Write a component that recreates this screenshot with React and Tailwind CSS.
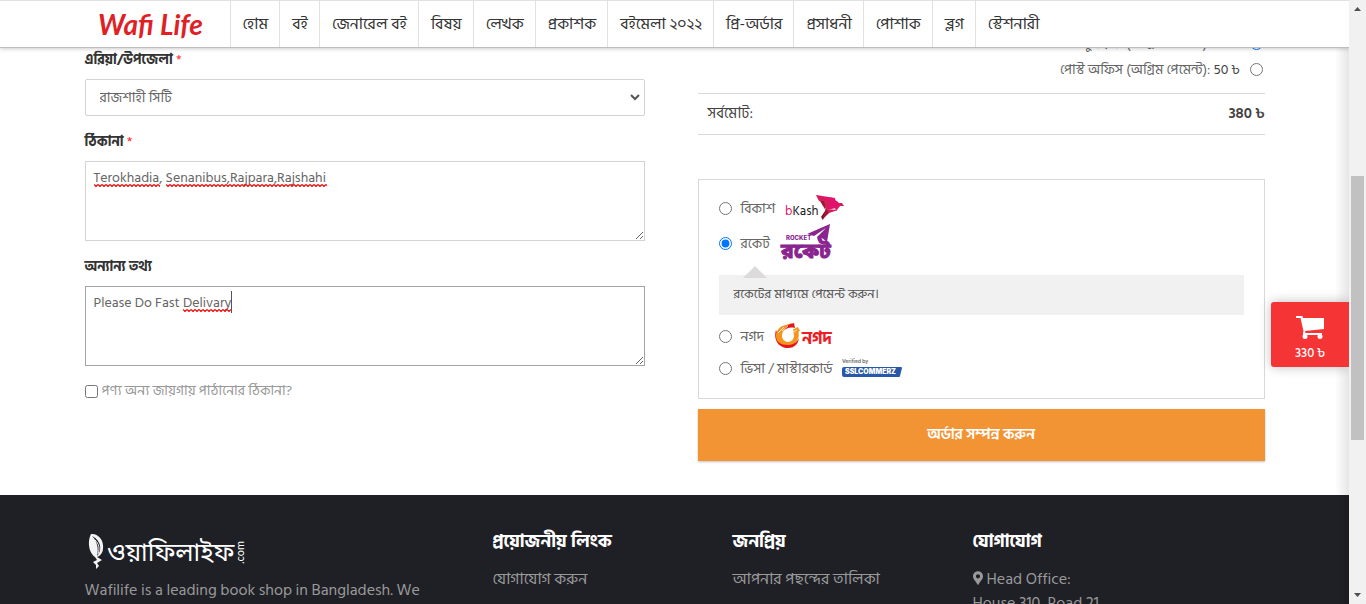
import React, { useId } from "react";
import { FaMapMarkerAlt } from "react-icons/fa";

const navItems = [
  "হোম",
  "বই",
  "জেনারেল বই",
  "বিষয়",
  "লেখক",
  "প্রকাশক",
  "বইমেলা ২০২২",
  "প্রি-অর্ডার",
  "প্রসাধনী",
  "পোশাক",
  "ব্লগ",
  "স্টেশনারী",
];

function Header() {
  return (
    <header className="relative z-10 h-12 shrink-0 border-y border-t-[#e1e1e1] border-b-[#bdbdbd] bg-white shadow-[0_1px_4px_rgba(0,0,0,0.2)]">
      <div className="mx-auto flex h-full w-full max-w-[1180px]">
        <a href="#home" aria-label="Wafi Life" className="flex w-[145px] shrink-0 items-center pl-3">
          <svg viewBox="0 0 110 42" className="h-[42px] w-[110px] overflow-visible">
            <text x="1" y="32" fontFamily="Lato, sans-serif" fontWeight="700" fontStyle="italic" fontSize="28" fill="#e01f26">
              Wafi Life
            </text>
          </svg>
        </a>
        <nav className="flex">
          {navItems.map((item) => (
            <a
              key={item}
              href="#nav"
              className="flex items-center whitespace-nowrap border-l border-[#e1e1e1] pr-[11px] pl-3 text-base text-[#333]"
            >
              {item}
            </a>
          ))}
        </nav>
      </div>
    </header>
  );
}

function Label({ htmlFor, required, children }) {
  return (
    <label htmlFor={htmlFor} className="mb-[7px] block pt-px text-sm leading-6 font-bold text-[#333]">
      {children}
      {required && <span className="font-normal text-[#ff3030]"> *</span>}
    </label>
  );
}

function Squiggle({ className }) {
  const id = useId();
  return (
    <svg className={"pointer-events-none absolute h-[3px] " + className}>
      <defs>
        <pattern id={id} width="4" height="3" patternUnits="userSpaceOnUse">
          <path d="M0 .5 L2 2.5 L4 .5" fill="none" stroke="#ff0000" strokeWidth="1.2" />
        </pattern>
      </defs>
      <rect width="100%" height="3" fill={`url(#${id})`} />
    </svg>
  );
}

function BillingForm() {
  return (
    <form className="pt-[19px]">
      <Label htmlFor="area" required>এরিয়া/উপজেলা</Label>
      <div className="relative">
        <select
          id="area"
          className="block h-[37px] w-full appearance-none rounded-xs border border-[#d3d3d3] bg-white px-[14px] text-sm text-[#666]"
        >
          <option>রাজশাহী সিটি</option>
        </select>
        <svg viewBox="0 0 10 7" className="pointer-events-none absolute top-[15px] right-[5px] h-[7px] w-[10px]">
          <path d="M1 1 L5 5 L9 1" fill="none" stroke="#555" strokeWidth="2" />
        </svg>
      </div>
      <div className="relative mt-[13px]">
        <Label htmlFor="address" required>ঠিকানা</Label>
        <textarea
          id="address"
          spellCheck={false}
          defaultValue="Terokhadia, Senanibus,Rajpara,Rajshahi"
          className="block h-20 w-full border border-[#d3d3d3] px-2 py-[5px] text-sm leading-[22px] text-[#666] outline-none"
        />
        <Squiggle className="top-[55px] left-[9px] w-[66px]" />
        <Squiggle className="top-[55px] left-[81px] w-[161px]" />
      </div>
      <div className="relative mt-[13px]">
        <Label htmlFor="notes">অন্যান্য তথ্য</Label>
        <textarea
          id="notes"
          spellCheck={false}
          defaultValue="Please Do Fast Delivary"
          className="block h-20 w-full border border-[#a4a4a4] px-2 py-[5px] text-sm leading-[22px] text-[#666] outline-none"
        />
        <Squiggle className="top-[55px] left-[98px] w-[49px]" />
        <span className="absolute top-[37px] left-[146px] h-[22px] w-px bg-[#555]" />
      </div>
      <label className="mt-[13px] flex items-center gap-1 text-sm leading-6 text-[#999]">
        <input type="checkbox" className="size-[13px]" />
        পণ্য অন্য জায়গায় পাঠানোর ঠিকানা?
      </label>
    </form>
  );
}

function BkashLogo() {
  return (
    <svg viewBox="0 0 60 28" className="h-7 w-[60px]">
      <text x="0" y="21" fontFamily="'Hind Siliguri', 'Open Sans', sans-serif" fontSize="13" fill="#222">
        <tspan fill="#e2136e">b</tspan>Kash
      </text>
      <path d="M31 1 L50 4 L51 14 L42 16Z" fill="#e2136e" />
      <path d="M31 1 L34 7 H38 L42 16 L45 8Z" fill="#d12053" />
      <path d="M35 7 L39 7 L41 17Z" fill="#9e1638" />
      <path d="M41 15 L53 16 L38 21Z" fill="#d12053" />
      <path d="M41 15 L37 26 L44 19Z" fill="#a3123a" />
      <path d="M46 3 L51 17 L56 11 L53 8Z" fill="#e2136e" />
      <path d="M52 9 L57 9 L59 12 L55 12Z" fill="#d12053" />
      <path d="M40 17 L36 23 L38 26Z" fill="#7d1020" />
    </svg>
  );
}

function RocketLogo() {
  return (
    <svg viewBox="0 0 62 38" className="h-[38px] w-[62px] overflow-visible">
      <text x="6" y="16" fontFamily="Inter, sans-serif" fontWeight="800" fontSize="6" fill="#8a248f">ROCKET</text>
      <text x="1" y="34" fontFamily="'Noto Sans Bengali', sans-serif" fontWeight="700" fontSize="21" fill="#8a248f" stroke="#8a248f">রকেট</text>
      <path d="M27 10 L50 0 L47 18 L42 14 L38 17 L37 13 L46 4 L34 12Z" fill="#8a248f" />
    </svg>
  );
}

function NagadLogo() {
  return (
    <svg viewBox="0 0 60 28" className="h-7 w-[60px] overflow-visible">
      <g transform="translate(1 0)">
        <path d="M1 8 C-2 18 4 26 13 26 C20 26 24 21 24 15 C24 22 8 28 1 8Z" fill="#e3161c" />
        <path d="M1 14 C1 8 5 4 11 3 L17 1 L13 6 C8 8 7 11 7 14 A6 6 0 0 0 19 14 L18 7 L23 8 C26 17 20 23 13 23 C6 23 1 20 1 14Z" fill="#f7941d" />
        <path d="M9 8 C11 4 14 2 19 1 L20 6 C15 5 12 6 9 8Z" fill="#e3161c" />
        <path d="M19 7 L23 5 L25 9 L20 11Z" fill="#f7941d" />
        <path d="M3 11 L9 5 M7 9 L13 4 M18 10 L22 8" stroke="#fff" fill="none" strokeWidth="0.8" />
      </g>
      <text x="28" y="22" fontFamily="'Hind Siliguri', 'Noto Sans Bengali', sans-serif" fontWeight="700" fontSize="17" fill="#ee1c25">নগদ</text>
    </svg>
  );
}

function SslLogo() {
  return (
    <svg viewBox="0 0 60 20" className="h-5 w-[60px]">
      <text x="0" y="5" fontFamily="Inter, sans-serif" fontSize="5" fontWeight="600" fill="#666">Verified by</text>
      <path d="M2 9 H59 Q60 9 60 10 L58 18 Q58 19 57 19 H2 Q0 19 0 17 V11 Q0 9 2 9Z" fill="#2859a8" />
      <text x="3" y="16" fontFamily="Inter, sans-serif" fontSize="7" fontWeight="900" fill="#fff">SSLCOMMERZ</text>
    </svg>
  );
}

function Payment({ name, logo, checked, className }) {
  return (
    <label className={"flex items-center text-sm text-[#666] " + className}>
      <input type="radio" name="payment" defaultChecked={checked} className="mr-[9px] size-[13px]" />
      <span className="mr-[10px] pt-px">{name}</span>
      {logo}
    </label>
  );
}

function OrderSummary() {
  return (
    <section>
      <div className="flex flex-col pt-0.5 text-sm text-[#666]">
        <label className="flex h-[26px] items-center justify-end gap-[10px]">
          <span className="pt-0.5">কুরিয়ার (অগ্রিম পেমেন্ট): 50 ৳</span>
          <input type="radio" name="shipping" defaultChecked className="mr-[2px] size-[13px]" />
        </label>
        <label className="flex h-[26px] items-center justify-end gap-[10px]">
          <span className="pt-0.5">পোস্ট অফিস (অগ্রিম পেমেন্ট): <span className="text-[#444]">50 ৳</span></span>
          <input type="radio" name="shipping" className="mr-[2px] size-[13px]" />
        </label>
      </div>
      <div className="mt-[11px] flex h-[42px] items-center justify-between border-y border-[#d9d9d9] pl-[10px] text-[#444]">
        <span className="text-[15px]">সর্বমোট:</span>
        <span className="text-[15px] font-semibold">380 ৳</span>
      </div>
      <div className="mt-11 border border-[#d9d9d9] px-5 pt-[11px] pb-[14px]">
        <Payment name="বিকাশ" logo={<BkashLogo />} className="h-[34px]" />
        <Payment name="রকেট" logo={<RocketLogo />} checked className="h-9" />
        <div className="relative mt-[14px] mb-[5px] flex h-10 items-center bg-[#f1f1f1] px-[15px] text-[13px] text-[#555]">
          <svg viewBox="0 0 24 12" className="absolute -top-[9px] left-6 h-3 w-6">
            <path d="M0 12 L12 0 L24 12Z" fill="#dcdadb" />
          </svg>
          রকেটের মাধ্যমে পেমেন্ট করুন।
        </div>
        <Payment name="নগদ" logo={<NagadLogo />} className="h-8" />
        <Payment name="ভিসা / মাস্টারকার্ড" logo={<SslLogo />} className="h-8" />
      </div>
      <button type="button" className="mt-[10px] block h-[52px] w-full bg-[#f29434] text-[15px] font-semibold text-white shadow-[0_1px_2px_rgba(0,0,0,0.25)]">
        অর্ডার সম্পন্ন করুন
      </button>
    </section>
  );
}

function FooterColumn({ title, children }) {
  return (
    <div>
      <h3 className="mb-[13px] text-lg leading-6 font-bold text-white">{title}</h3>
      {children}
    </div>
  );
}

function Footer() {
  return (
    <footer className="flex-1 bg-[#1f2026] pt-[35px] text-base leading-6 text-[#999]">
      <div className="mx-auto grid max-w-[1180px] grid-cols-[408px_240px_240px_1fr]">
        <div>
          <svg viewBox="0 0 160 40" className="mt-[3px] ml-[3px] h-10 w-40" role="img" aria-label="ওয়াফিলাইফ.com">
            <path d="M3 1 C10 0 16 7 15 15 C15 20 12 23 9 24 L14 27 L9 30 L11 33 L8 36 L8 32 L5 29 L9 27 L7 24 C1 20 -1 9 3 1Z" fill="#f4f4f4" />
            <path d="M4 3 C9 8 11 15 9 23 C14 18 14 8 4 3Z" fill="#1f2026" />
            <path d="M7 7 C11 11 12 15 10 21" stroke="#f4f4f4" fill="none" />
            <text x="19" y="28" fontFamily="'Noto Sans Bengali', sans-serif" fontSize="25" fill="#fff">ওয়াফিলাইফ</text>
            <text transform="translate(156 31) rotate(-90)" fontFamily="Lato, sans-serif" fontSize="11" fill="#fff">.com</text>
          </svg>
          <p className="mt-[5px] max-w-[360px]">
            Wafilife is a leading book shop in Bangladesh. We
          </p>
        </div>
        <FooterColumn title="প্রয়োজনীয় লিংক">
          <a href="#contact" className="block">যোগাযোগ করুন</a>
          <a href="#terms" className="mt-3 block">শর্তাবলী</a>
        </FooterColumn>
        <FooterColumn title="জনপ্রিয়">
          <a href="#wishlist" className="block">আপনার পছন্দের তালিকা</a>
        </FooterColumn>
        <FooterColumn title="যোগাযোগ">
          <address className="not-italic">
            <FaMapMarkerAlt className="mr-1 inline-block h-[14px] w-[10px] align-[-1px]" />
            Head Office:
            <br />
            House 310, Road 21
          </address>
        </FooterColumn>
      </div>
    </footer>
  );
}

function CartButton() {
  return (
    <button
      type="button"
      className="absolute top-[302px] right-0 z-20 flex h-[65px] w-[78px] flex-col items-center rounded-l-[3px] bg-[#f53535] pt-[13px] text-[13px] font-medium text-white shadow-[0_0_12px_rgba(0,0,0,0.25)]"
    >
      <svg viewBox="0 0 30 24" className="h-6 w-[30px]" fill="#fff">
        <path d="M1 1 H7.5 L8 3 H29 V14 L10 16 L10.500 18 H27 V20 H8 V18 L8.500 16 L5.500 3 H1Z" />
        <circle cx="10" cy="21.500" r="2.500" />
        <circle cx="25" cy="21.500" r="2.500" />
      </svg>
      <span className="leading-7">330 ৳</span>
    </button>
  );
}

function ScrollBar() {
  return (
    <div className="flex w-[17px] shrink-0 flex-col items-center bg-[#f1f1f1]">
      <svg viewBox="0 0 17 17" className="size-[17px]"><path d="M5 11 L8.500 7 L12 11Z" fill="#505050" /></svg>
      <div className="mt-[159px] h-[264px] w-[13px] bg-[#c1c1c1]" />
      <svg viewBox="0 0 17 17" className="mt-auto size-[17px]"><path d="M5 6 L8.500 10 L12 6Z" fill="#505050" /></svg>
    </div>
  );
}

export default function App() {
  return (
    <div className="flex h-screen overflow-hidden bg-white font-['Hind_Siliguri','Noto_Sans_Bengali','Noto_Sans',sans-serif]">
      <div className="relative flex min-w-0 flex-1 flex-col overflow-hidden">
        <Header />
        <main className="mx-auto -mt-5 mb-[34px] grid w-full max-w-[1180px] shrink-0 grid-cols-[560fr_567fr] gap-[53px]">
          <BillingForm />
          <OrderSummary />
        </main>
        <Footer />
        <div className="pointer-events-none absolute inset-y-0 right-0 w-[14px] bg-gradient-to-l from-black/10 to-transparent" />
        <CartButton />
      </div>
      <ScrollBar />
    </div>
  );
}
